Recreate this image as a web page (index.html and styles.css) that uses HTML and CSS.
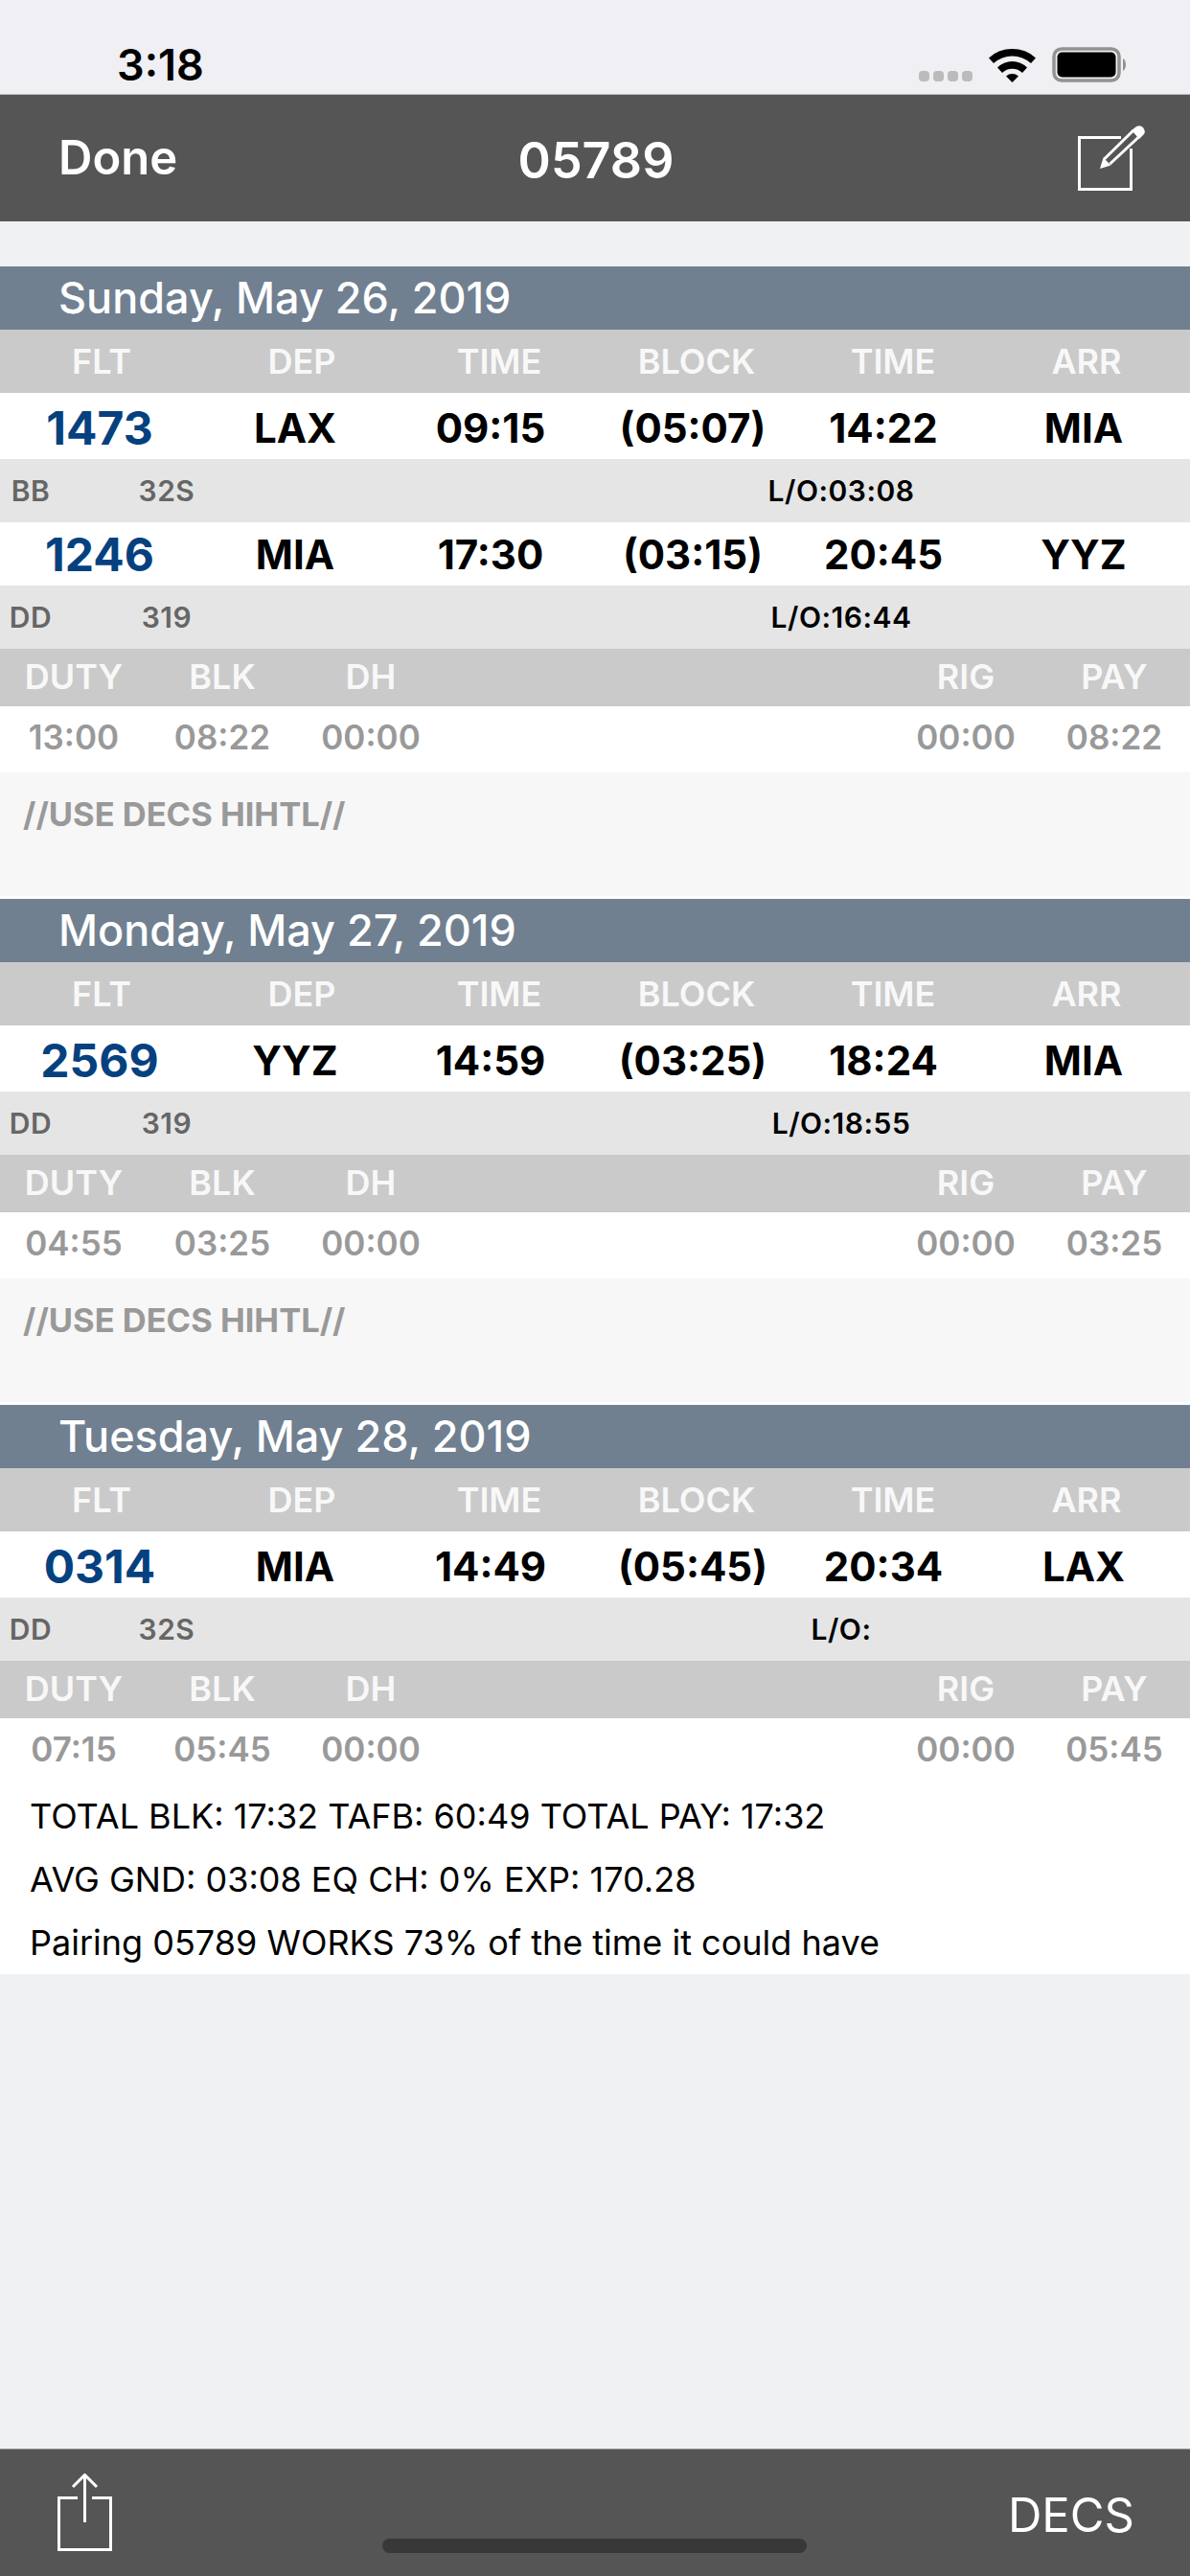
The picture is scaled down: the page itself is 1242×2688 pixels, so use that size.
FILE: index.html
```html
<!doctype html>
<html lang="en">
<head>
    <meta charset="UTF-8">
    <title>05789</title>
    <link rel="stylesheet" href="styles.css">
</head>
<body>
<div id="status">
    <span class="clock">3:18</span>
    <div class="status-icons">
        <div class="signal"><i></i><i></i><i></i><i></i></div>
        <svg class="wifi" width="49" height="37" viewBox="0 0 49 37">
            <path d="M0 11.5 A36 36 0 0 1 49 11.5 L44 17 A29 29 0 0 0 5 17 Z"/>
            <path d="M9 21.5 A22 22 0 0 1 40 21.5 L35 27 A15 15 0 0 0 14 27 Z"/>
            <path d="M18 30.5 A10 10 0 0 1 31 30.5 L24.5 37 Z"/>
        </svg>
        <svg class="battery" width="79" height="37" viewBox="0 0 79 37">
            <rect x="2" y="2" width="68" height="33" rx="8" fill="none" stroke="#929292" stroke-width="3.5"/>
            <rect x="5.5" y="5.5" width="61" height="26" rx="5"/>
            <path d="M74 12 C78 14 78 23 74 25 Z" fill="#929292"/>
        </svg>
    </div>
</div>
<div id="nav">
    <span class="done">Done</span>
    <span class="nav-title">05789</span>
    <svg class="edit" width="72" height="72" viewBox="0 0 72 72">
        <path d="M47 13.5 H3.5 V67.5 H57.5 V25" fill="none" stroke="#fff" stroke-width="3"/>
        <path d="M25 46 L28.5 34.5 L36.5 42.5 Z" fill="#fff"/>
        <path d="M29.5 36 L60 6 M35.5 41 L66 12.5" fill="none" stroke="#fff" stroke-width="3"/>
        <path d="M58 6 L63 2 Q67 0 70 3 Q73 7 71 10 L66 15 Z" fill="#fff"/>
    </svg>
</div>

<div id="sheet">
    <section class="day">
        <div class="day-title">Sunday, May 26, 2019</div>
        <div class="heads"><span>FLT</span><span>DEP</span><span>TIME</span><span>BLOCK</span><span>TIME</span><span>ARR</span></div>
        <div class="leg"><span class="flt">1473</span><span>LAX</span><span>09:15</span><span>(05:07)</span><span>14:22</span><span>MIA</span></div>
        <div class="sub"><span>BB</span><span>32S</span><span></span><span class="layover">L/O:03:08</span></div>
        <div class="leg leg-next"><span class="flt">1246</span><span>MIA</span><span>17:30</span><span>(03:15)</span><span>20:45</span><span>YYZ</span></div>
        <div class="sub"><span>DD</span><span>319</span><span></span><span class="layover">L/O:16:44</span></div>
        <div class="sum-heads"><span>DUTY</span><span>BLK</span><span>DH</span><span></span><span>RIG</span><span>PAY</span></div>
        <div class="sum-vals"><span>13:00</span><span>08:22</span><span>00:00</span><span></span><span>00:00</span><span>08:22</span></div>
        <div class="note">//USE DECS HIHTL//</div>
    </section>
    <section class="day">
        <div class="day-title">Monday, May 27, 2019</div>
        <div class="heads"><span>FLT</span><span>DEP</span><span>TIME</span><span>BLOCK</span><span>TIME</span><span>ARR</span></div>
        <div class="leg"><span class="flt">2569</span><span>YYZ</span><span>14:59</span><span>(03:25)</span><span>18:24</span><span>MIA</span></div>
        <div class="sub"><span>DD</span><span>319</span><span></span><span class="layover">L/O:18:55</span></div>
        <div class="sum-heads"><span>DUTY</span><span>BLK</span><span>DH</span><span></span><span>RIG</span><span>PAY</span></div>
        <div class="sum-vals"><span>04:55</span><span>03:25</span><span>00:00</span><span></span><span>00:00</span><span>03:25</span></div>
        <div class="note">//USE DECS HIHTL//</div>
    </section>
    <section class="day">
        <div class="day-title">Tuesday, May 28, 2019</div>
        <div class="heads"><span>FLT</span><span>DEP</span><span>TIME</span><span>BLOCK</span><span>TIME</span><span>ARR</span></div>
        <div class="leg"><span class="flt">0314</span><span>MIA</span><span>14:49</span><span>(05:45)</span><span>20:34</span><span>LAX</span></div>
        <div class="sub"><span>DD</span><span>32S</span><span></span><span class="layover">L/O:</span></div>
        <div class="sum-heads"><span>DUTY</span><span>BLK</span><span>DH</span><span></span><span>RIG</span><span>PAY</span></div>
        <div class="sum-vals"><span>07:15</span><span>05:45</span><span>00:00</span><span></span><span>00:00</span><span>05:45</span></div>
    </section>
    <div class="totals">
        <div>TOTAL BLK: 17:32 TAFB: 60:49 TOTAL PAY: 17:32</div>
        <div>AVG GND: 03:08 EQ CH: 0% EXP: 170.28</div>
        <div>Pairing 05789 WORKS 73% of the time it could have</div>
    </div>
</div>

<div id="toolbar">
    <svg class="share" width="58" height="84" viewBox="0 0 58 84">
        <path d="M21 25.5 H1.5 V79.5 H55.5 V25.5 H36" fill="none" stroke="#fff" stroke-width="3"/>
        <path d="M28.5 2 V51 M16 14 L28.5 1.5 L41 14" fill="none" stroke="#fff" stroke-width="3"/>
    </svg>
    <span class="decs">DECS</span>
    <div class="home-bar"></div>
</div>
</body>
</html>
```

FILE: styles.css
```css
* {
    box-sizing: border-box;
}

html, body {
    margin: 0;
    padding: 0;
}

body {
    width: 1242px;
    height: 2688px;
    display: flex;
    flex-direction: column;
    background: #efeff4;
    font-family: Inter, "Liberation Sans", sans-serif;
    overflow: hidden;
}

#status {
    height: 99px;
    display: flex;
    justify-content: space-between;
    padding: 43px 65px 0 122px;
    border-bottom: 1px solid #b8b8b8;
}

.clock {
    font-size: 45px;
    font-weight: 600;
    line-height: 50px;
    color: #000;
}

.status-icons {
    display: flex;
    align-items: flex-start;
    padding-top: 6px;
}

.signal {
    display: flex;
    gap: 4px;
    margin: 25px 17px 0 0;
}

.signal i {
    width: 11px;
    height: 11px;
    border-radius: 4px;
    background: #bbb;
}

.wifi {
    margin-right: 17px;
}

#nav {
    position: relative;
    height: 132px;
    display: flex;
    align-items: center;
    justify-content: center;
    background: #555;
    color: #fff;
}

.done {
    position: absolute;
    left: 61px;
    top: 38px;
    font-size: 49px;
    font-weight: 600;
    line-height: 56px;
}

.nav-title {
    font-size: 52px;
    font-weight: 600;
    margin: 5px 0 0 2px;
}

.edit {
    position: absolute;
    left: 1123px;
    top: 31px;
}

#sheet {
    flex: 1;
    padding-top: 47px;
    background: #f0f1f3;
}

.day-title {
    height: 66px;
    padding-left: 61px;
    background: #708090;
    color: #fff;
    font-size: 45px;
    font-weight: 500;
    line-height: 66px;
}

.heads, .leg, .sum-heads, .sum-vals, .sub {
    display: grid;
    align-items: center;
    text-align: center;
}

.heads {
    height: 66px;
    grid-template-columns: 212px 206px 206px 206px 204px 200px;
    background: #cacaca;
    color: #f8f8f8;
    font-size: 36px;
    font-weight: 600;
}

.leg {
    height: 69px;
    padding-top: 3px;
    grid-template-columns: 208px 200px 208px 214px 184px 228px;
    background: #fff;
    color: #000;
    font-size: 42px;
    font-weight: 700;
}

.leg span:last-child {
    padding-left: 6px;
}

.leg-next {
    height: 66px;
    padding-top: 1px;
}

.flt {
    color: #05417f;
    font-size: 48px;
}

.sub {
    height: 66px;
    grid-template-columns: 64px 220px 308px 572px;
    background: #e5e5e5;
    color: #666;
    font-size: 30px;
    font-weight: 600;
    letter-spacing: 0.5px;
}

.layover {
    color: #000;
}

.sum-heads, .sum-vals {
    grid-template-columns: 154px 156px 154px 467px 154px 156px;
}

.sum-heads {
    height: 60px;
    padding-bottom: 2px;
    background: #cacaca;
    color: #f8f8f8;
    font-size: 36px;
    font-weight: 600;
}

.sum-vals {
    height: 69px;
    padding-bottom: 5px;
    background: #fff;
    color: #999;
    font-size: 35px;
    font-weight: 600;
}

.note {
    height: 132px;
    padding: 24px 0 0 24px;
    background: #f7f7f7;
    border-bottom: 3px solid #fcfcfc;
    color: #999;
    font-size: 34.5px;
    font-weight: 700;
    line-height: 40px;
}

.totals {
    height: 198px;
    padding-left: 31px;
    background: #fff;
    color: #000;
    font-size: 36px;
    line-height: 66px;
}

#toolbar {
    position: relative;
    height: 133px;
    display: flex;
    justify-content: space-between;
    padding: 25px 58px 0 60px;
    background: #555;
    border-top: 1px solid #9a9a9a;
    color: #fff;
}

.decs {
    font-size: 49px;
    line-height: 56px;
    margin-top: 16px;
}

.home-bar {
    position: absolute;
    left: 399px;
    bottom: 24px;
    width: 443px;
    height: 15px;
    border-radius: 8px;
    background: #383838;
}
```
